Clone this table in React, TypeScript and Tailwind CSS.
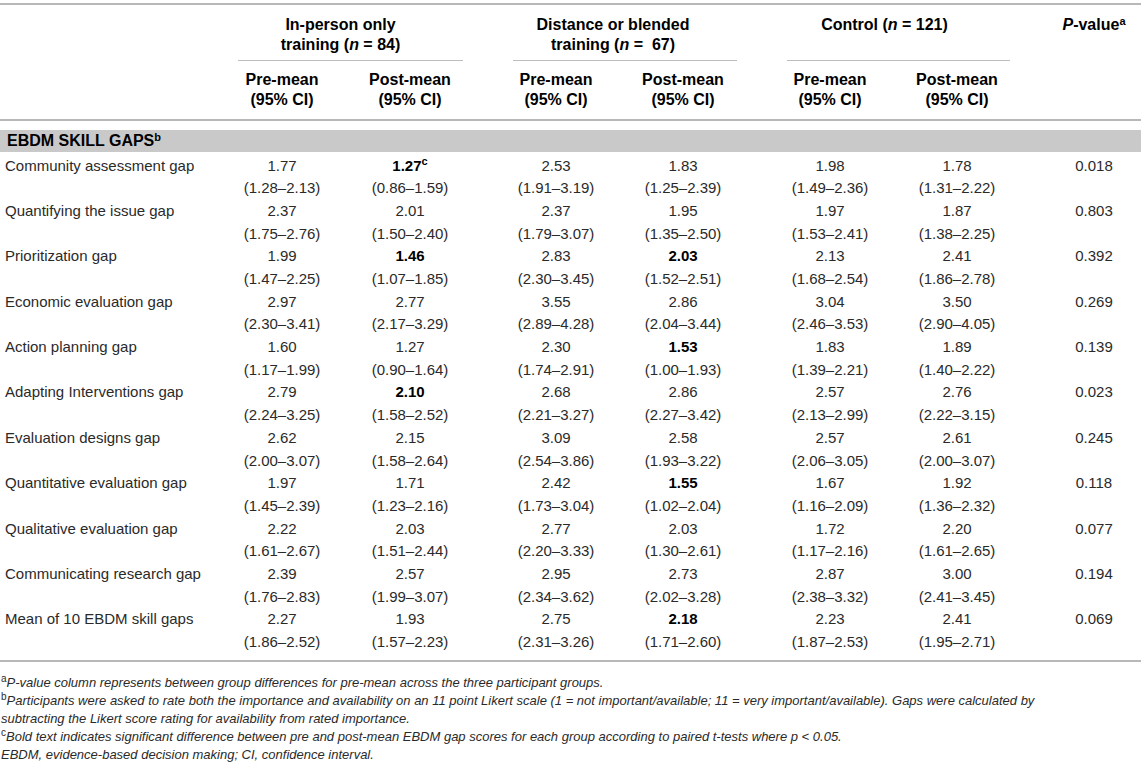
import React from "react";

// cell columns after the label column (width + gap before it)
const COLS = [
  "w-[100px]",
  "ml-[28px] w-[100px]",
  "ml-[46px] w-[100px]",
  "ml-[27px] w-[100px]",
  "ml-[47px] w-[100px]",
  "ml-[27px] w-[100px]",
  "ml-[40px] w-[94px]",
];

type Row = { label: string; cells: string[]; p: string };

// "*" marks a bold value, "^c" a superscript
const rows: Row[] = [
  { label: "Community assessment gap", cells: ["1.77|1.28–2.13", "*1.27^c|0.86–1.59", "2.53|1.91–3.19", "1.83|1.25–2.39", "1.98|1.49–2.36", "1.78|1.31–2.22"], p: "0.018" },
  { label: "Quantifying the issue gap", cells: ["2.37|1.75–2.76", "2.01|1.50–2.40", "2.37|1.79–3.07", "1.95|1.35–2.50", "1.97|1.53–2.41", "1.87|1.38–2.25"], p: "0.803" },
  { label: "Prioritization gap", cells: ["1.99|1.47–2.25", "*1.46|1.07–1.85", "2.83|2.30–3.45", "*2.03|1.52–2.51", "2.13|1.68–2.54", "2.41|1.86–2.78"], p: "0.392" },
  { label: "Economic evaluation gap", cells: ["2.97|2.30–3.41", "2.77|2.17–3.29", "3.55|2.89–4.28", "2.86|2.04–3.44", "3.04|2.46–3.53", "3.50|2.90–4.05"], p: "0.269" },
  { label: "Action planning gap", cells: ["1.60|1.17–1.99", "1.27|0.90–1.64", "2.30|1.74–2.91", "*1.53|1.00–1.93", "1.83|1.39–2.21", "1.89|1.40–2.22"], p: "0.139" },
  { label: "Adapting Interventions gap", cells: ["2.79|2.24–3.25", "*2.10|1.58–2.52", "2.68|2.21–3.27", "2.86|2.27–3.42", "2.57|2.13–2.99", "2.76|2.22–3.15"], p: "0.023" },
  { label: "Evaluation designs gap", cells: ["2.62|2.00–3.07", "2.15|1.58–2.64", "3.09|2.54–3.86", "2.58|1.93–3.22", "2.57|2.06–3.05", "2.61|2.00–3.07"], p: "0.245" },
  { label: "Quantitative evaluation gap", cells: ["1.97|1.45–2.39", "1.71|1.23–2.16", "2.42|1.73–3.04", "*1.55|1.02–2.04", "1.67|1.16–2.09", "1.92|1.36–2.32"], p: "0.118" },
  { label: "Qualitative evaluation gap", cells: ["2.22|1.61–2.67", "2.03|1.51–2.44", "2.77|2.20–3.33", "2.03|1.30–2.61", "1.72|1.17–2.16", "2.20|1.61–2.65"], p: "0.077" },
  { label: "Communicating research gap", cells: ["2.39|1.76–2.83", "2.57|1.99–3.07", "2.95|2.34–3.62", "2.73|2.02–3.28", "2.87|2.38–3.32", "3.00|2.41–3.45"], p: "0.194" },
  { label: "Mean of 10 EBDM skill gaps", cells: ["2.27|1.86–2.52", "1.93|1.57–2.23", "2.75|2.31–3.26", "*2.18|1.71–2.60", "2.23|1.87–2.53", "2.41|1.95–2.71"], p: "0.069" },
];

function Value({ raw }: { raw: string }) {
  const [v, ci] = raw.split("|");
  const bold = v.startsWith("*");
  const [num, sup] = v.replace("*", "").split("^");
  return (
    <>
      <div className={bold ? "font-bold text-black" : ""}>
        {num}
        {sup && <sup className="text-[11px]">{sup}</sup>}
      </div>
      <div>({ci})</div>
    </>
  );
}

function DataRow({ row }: { row: Row }) {
  return (
    <div className="flex h-[45.4px] items-start">
      <div className="w-[232px] pl-[5px]">{row.label}</div>
      {row.cells.map((c, i) => (
        <div key={i} className={`${COLS[i]} text-center`}>
          <Value raw={c} />
        </div>
      ))}
      <div className={`${COLS[6]} text-center`}>{row.p}</div>
    </div>
  );
}

export default function App() {
  const pre = (
    <>
      <div>Pre-mean</div>
      <div>(95% CI)</div>
    </>
  );
  const post = (
    <>
      <div>Post-mean</div>
      <div>(95% CI)</div>
    </>
  );
  return (
    <div className="min-h-[771px] bg-white font-['Liberation_Sans',Arial,sans-serif] text-[#2a2a2a]">
      <div className="w-[1141px] pt-[3px]">
        <div className="border-t-2 border-[#b8b8b8]" />

        {/* group headers */}
        <div className="flex pt-[10px] text-[16px] font-bold leading-[20px] text-black">
          <div className="w-[238px]" />
          <div className="w-[225px]">
            <div className="pr-[20px] text-center">
              <div>In-person only</div>
              <div>
                training (<i>n</i> = 84)
              </div>
            </div>
            <div className="mt-[5px] border-t border-[#bdbdbd]" />
          </div>
          <div className="ml-[50px] w-[224px]">
            <div className="pr-[24px] text-center">
              <div>Distance or blended</div>
              <div>
                training (<i>n</i> =&nbsp; 67)
              </div>
            </div>
            <div className="mt-[5px] border-t border-[#bdbdbd]" />
          </div>
          <div className="ml-[50px] w-[223px]">
            <div className="pr-[28px] text-center">
              Control (<i>n</i> = 121)
            </div>
          </div>
          <div className="ml-[37px] w-[94px] text-center">
            <i>P</i>-value<sup className="text-[11px]">a</sup>
          </div>
        </div>
        <div className="flex">
          <div className="ml-[787px] mt-[-1px] w-[223px] border-t border-[#bdbdbd]" />
        </div>

        {/* sub headers */}
        <div className="flex pt-[9px] text-[16px] font-bold leading-[20px] text-black">
          <div className="w-[232px]" />
          <div className={`${COLS[0]} text-center`}>{pre}</div>
          <div className={`${COLS[1]} text-center`}>{post}</div>
          <div className={`${COLS[2]} text-center`}>{pre}</div>
          <div className={`${COLS[3]} text-center`}>{post}</div>
          <div className={`${COLS[4]} text-center`}>{pre}</div>
          <div className={`${COLS[5]} text-center`}>{post}</div>
        </div>
        <div className="mt-[9px] border-t-2 border-[#b8b8b8]" />

        {/* section band */}
        <div className="mt-[9px] h-[22px] bg-[#c9c9c9] pl-[7px] text-[16px] font-bold leading-[22px] text-black">
          EBDM SKILL GAPS<sup className="text-[11px]">b</sup>
        </div>

        <div className="pt-[2.5px] text-[15px] leading-[22.7px]">
          {rows.map((r) => (
            <DataRow key={r.label} row={r} />
          ))}
        </div>

        <div className="mt-[6px] border-t-2 border-[#b8b8b8]" />

        {/* footnotes */}
        <div className="pt-[12px] pl-[1px] text-[13px] italic leading-[18px]">
          <div>
            <sup className="not-italic text-[10px]">a</sup>P-value column represents between group differences for pre-mean across the three participant groups.
          </div>
          <div>
            <sup className="not-italic text-[10px]">b</sup>Participants were asked to rate both the importance and availability on an 11 point Likert scale (1 = not important/available; 11 = very important/available). Gaps were calculated by
            <br />
            subtracting the Likert score rating for availability from rated importance.
          </div>
          <div>
            <sup className="not-italic text-[10px]">c</sup>Bold text indicates significant difference between pre and post-mean EBDM gap scores for each group according to paired t-tests where p &lt; 0.05.
          </div>
          <div>EBDM, evidence-based decision making; CI, confidence interval.</div>
        </div>
      </div>
    </div>
  );
}
